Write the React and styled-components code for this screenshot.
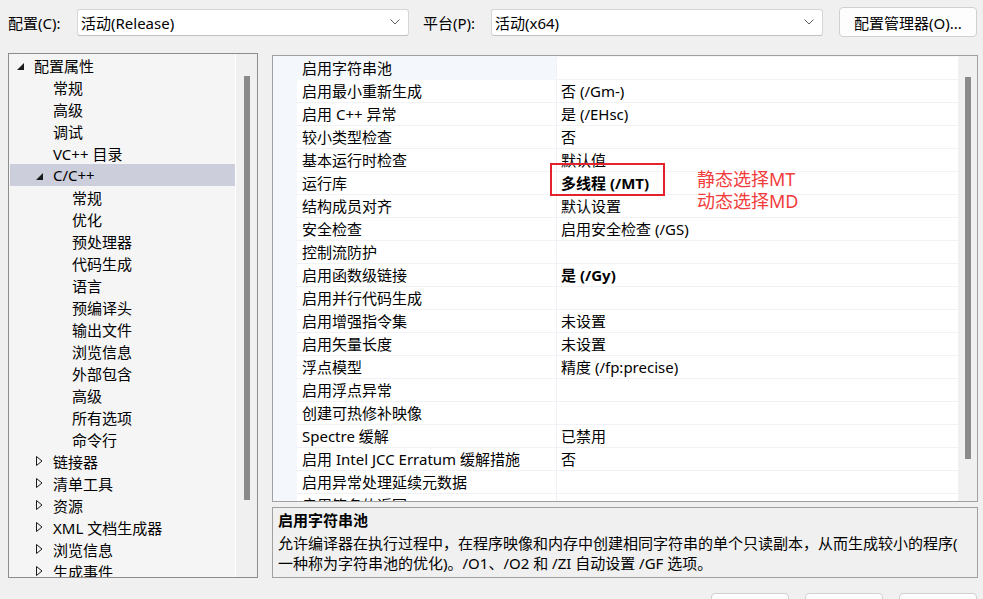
import styled, { createGlobalStyle } from 'styled-components'

const GlobalStyle = createGlobalStyle`
  html, body {
    margin: 0;
    padding: 0;
    background: #f0f0f0;
  }
  body {
    font-family: "Noto Sans", "Noto Sans CJK SC", sans-serif;
    font-size: 15px;
    color: #000;
  }
`

const treeItems = [
  { label: '配置属性', level: 0, toggle: 'open' },
  { label: '常规', level: 1 },
  { label: '高级', level: 1 },
  { label: '调试', level: 1 },
  { label: 'VC++ 目录', level: 1 },
  { label: 'C/C++', level: 1, toggle: 'open', selected: true },
  { label: '常规', level: 2 },
  { label: '优化', level: 2 },
  { label: '预处理器', level: 2 },
  { label: '代码生成', level: 2 },
  { label: '语言', level: 2 },
  { label: '预编译头', level: 2 },
  { label: '输出文件', level: 2 },
  { label: '浏览信息', level: 2 },
  { label: '外部包含', level: 2 },
  { label: '高级', level: 2 },
  { label: '所有选项', level: 2 },
  { label: '命令行', level: 2 },
  { label: '链接器', level: 1, toggle: 'closed' },
  { label: '清单工具', level: 1, toggle: 'closed' },
  { label: '资源', level: 1, toggle: 'closed' },
  { label: 'XML 文档生成器', level: 1, toggle: 'closed' },
  { label: '浏览信息', level: 1, toggle: 'closed' },
  { label: '生成事件', level: 1, toggle: 'closed' },
  { label: '自定义生成步骤', level: 1, toggle: 'closed' },
]

const properties = [
  { name: '启用字符串池', value: '', selected: true },
  { name: '启用最小重新生成', value: '否 (/Gm-)' },
  { name: '启用 C++ 异常', value: '是 (/EHsc)' },
  { name: '较小类型检查', value: '否' },
  { name: '基本运行时检查', value: '默认值' },
  { name: '运行库', value: '多线程 (/MT)', bold: true },
  { name: '结构成员对齐', value: '默认设置' },
  { name: '安全检查', value: '启用安全检查 (/GS)' },
  { name: '控制流防护', value: '' },
  { name: '启用函数级链接', value: '是 (/Gy)', bold: true },
  { name: '启用并行代码生成', value: '' },
  { name: '启用增强指令集', value: '未设置' },
  { name: '启用矢量长度', value: '未设置' },
  { name: '浮点模型', value: '精度 (/fp:precise)' },
  { name: '启用浮点异常', value: '' },
  { name: '创建可热修补映像', value: '' },
  { name: 'Spectre 缓解', value: '已禁用' },
  { name: '启用 Intel JCC Erratum 缓解措施', value: '否' },
  { name: '启用异常处理延续元数据', value: '' },
  { name: '启用签名的返回', value: '' },
]

const Chevron = () => (
  <svg width="10" height="6" viewBox="0 0 10 6">
    <polyline points="0.5,0.5 5,5 9.5,0.5" fill="none" stroke="#606060" strokeWidth="1" />
  </svg>
)

const Toggle = ({ state }) => {
  if (state === 'open') {
    return (
      <ToggleBox $open>
        <svg width="7" height="7" viewBox="0 0 7 7">
          <polygon points="7,0 7,7 0,7" fill="#1a1a1a" />
        </svg>
      </ToggleBox>
    )
  }
  if (state === 'closed') {
    return (
      <ToggleBox>
        <svg width="7" height="10" viewBox="0 0 7 10">
          <polygon points="0.5,0.5 6,5 0.5,9.5" fill="none" stroke="#1a1a1a" strokeWidth="1" />
        </svg>
      </ToggleBox>
    )
  }
  return <ToggleBox />
}

const App = () => {
  return (
    <>
      <GlobalStyle />
      <Page>
        <TopBar>
          <Label>配置(C):</Label>
          <Combo>
            <span>活动(Release)</span>
            <Chevron />
          </Combo>
          <Label $indent>平台(P):</Label>
          <Combo>
            <span>活动(x64)</span>
            <Chevron />
          </Combo>
          <ManagerButton>配置管理器(O)...</ManagerButton>
        </TopBar>

        <Main>
          <TreePanel>
            <TreeList>
              {treeItems.map((item, i) => (
                <TreeRow key={i} $level={item.level} $selected={item.selected}>
                  <Toggle state={item.toggle} />
                  <span>{item.label}</span>
                </TreeRow>
              ))}
            </TreeList>
            <ScrollTrack $width={21}>
              <ScrollThumb $top={22} $height={424} />
            </ScrollTrack>
          </TreePanel>

          <RightColumn>
            <GridPanel>
              <GridBody>
                {properties.map((p, i) => (
                  <GridRow key={i}>
                    <Gutter />
                    <NameCell $selected={p.selected}>{p.name}</NameCell>
                    <ValueCell $bold={p.bold}>{p.value}</ValueCell>
                  </GridRow>
                ))}
              </GridBody>
              <ScrollTrack $width={19}>
                <ScrollThumb $top={21} $height={382} />
              </ScrollTrack>
              <RedBox />
              <Note>
                <div>静态选择MT</div>
                <div>动态选择MD</div>
              </Note>
            </GridPanel>

            <Description>
              <DescTitle>启用字符串池</DescTitle>
              <DescText>
                允许编译器在执行过程中，在程序映像和内存中创建相同字符串的单个只读副本，从而生成较小的程序(
                <br />
                一种称为字符串池的优化)。/O1、/O2 和 /ZI 自动设置 /GF 选项。
              </DescText>
            </Description>
          </RightColumn>
        </Main>

        <BottomBar>
          <DialogButton>确定</DialogButton>
          <DialogButton>取消</DialogButton>
          <DialogButton>应用(A)</DialogButton>
        </BottomBar>
      </Page>
    </>
  )
}

const Page = styled.div`
  width: 983px;
  height: 599px;
  box-sizing: border-box;
  padding: 7px 5px 0 8px;
  display: flex;
  flex-direction: column;
  overflow: hidden;
`

const TopBar = styled.div`
  height: 30px;
  display: flex;
  align-items: center;
`

const Label = styled.div`
  width: ${({ $indent }) => ($indent ? '68px' : '69px')};
  padding-left: ${({ $indent }) => ($indent ? '14px' : '0')};
  white-space: nowrap;
`

const Combo = styled.div`
  width: 332px;
  height: 27px;
  box-sizing: border-box;
  background: #fff;
  border: 1px solid #d6d6d6;
  border-bottom-color: #c0c0c0;
  border-radius: 3px;
  display: flex;
  align-items: center;
  justify-content: space-between;
  padding: 0 8px 0 3px;
`

const ManagerButton = styled.div`
  margin-left: 16px;
  width: 138px;
  height: 30px;
  box-sizing: border-box;
  border: 1px solid #d0d0d0;
  border-radius: 4px;
  background: #fdfdfd;
  display: flex;
  align-items: center;
  justify-content: center;
`

const Main = styled.div`
  margin-top: 16px;
  height: 525px;
  display: grid;
  grid-template-columns: 250px 1fr;
  gap: 14px;
`

const TreePanel = styled.div`
  border: 1px solid #8c8c8c;
  background: #f5f5f5;
  display: flex;
  overflow: hidden;
`

const TreeList = styled.div`
  flex: 1;
  padding: 0 0 0 1px;
  border-right: 1px solid #fff;
  overflow: hidden;
`

const TreeRow = styled.div`
  height: 22px;
  display: flex;
  align-items: center;
  padding-left: ${({ $level }) => 7 + $level * 19}px;
  background: ${({ $selected }) => ($selected ? '#cccedb' : 'transparent')};
  white-space: nowrap;
`

const ToggleBox = styled.span`
  width: 17px;
  flex-shrink: 0;
  display: flex;
  align-items: center;
  padding-top: ${({ $open }) => ($open ? '3px' : '0')};
`

const ScrollTrack = styled.div`
  width: ${({ $width }) => $width}px;
  flex-shrink: 0;
  background: #f0f0f0;
  display: flex;
  justify-content: center;
`

const ScrollThumb = styled.div`
  width: 6px;
  margin-top: ${({ $top }) => $top}px;
  height: ${({ $height }) => $height}px;
  background: #8a8a8a;
`

const RightColumn = styled.div`
  padding-top: 2px;
  display: flex;
  flex-direction: column;
  gap: 5px;
  min-width: 0;
`

const GridPanel = styled.div`
  position: relative;
  height: 447px;
  box-sizing: border-box;
  border: 1px solid #a0a0a0;
  background: #fff;
  display: flex;
  overflow: hidden;
`

const GridBody = styled.div`
  flex: 1;
  padding-top: 1px;
  background: #f4f7fb;
  overflow: hidden;
`

const GridRow = styled.div`
  display: grid;
  grid-template-columns: 24px 260px 1fr;
  height: 23px;
`

const Gutter = styled.div`
  background: #f4f7fb;
`

const NameCell = styled.div`
  padding-left: 5px;
  line-height: 22px;
  white-space: nowrap;
  overflow: hidden;
  background: ${({ $selected }) => ($selected ? '#f4f7fb' : '#fff')};
  border-right: 1px solid #eef0f5;
  border-bottom: 1px solid ${({ $selected }) => ($selected ? '#f4f7fb' : '#f0f2f7')};
`

const ValueCell = styled.div`
  padding-left: 4px;
  line-height: 22px;
  white-space: nowrap;
  background: #fff;
  font-weight: ${({ $bold }) => ($bold ? 700 : 400)};
  border-bottom: 1px solid #f0f2f7;
`

const RedBox = styled.div`
  position: absolute;
  left: 277px;
  top: 107px;
  width: 115px;
  height: 33px;
  box-sizing: border-box;
  border: 2px solid #e3222c;
`

const Note = styled.div`
  position: absolute;
  left: 424px;
  top: 112px;
  color: #f23c3c;
  font-size: 18px;
  line-height: 22px;
`

const Description = styled.div`
  height: 71px;
  box-sizing: border-box;
  border: 1px solid #a0a0a0;
  background: #f0f0f0;
  padding: 1px 5px 0;
  overflow: hidden;
`

const DescTitle = styled.div`
  font-weight: 700;
  line-height: 22px;
`

const DescText = styled.div`
  margin-top: 2px;
  line-height: 20px;
  white-space: nowrap;
`

const BottomBar = styled.div`
  margin-top: 15px;
  display: flex;
  justify-content: flex-end;
  gap: 16px;
  padding-right: 1px;
`

const DialogButton = styled.div`
  width: 78px;
  height: 30px;
  box-sizing: border-box;
  border: 1px solid #d0d0d0;
  border-radius: 4px;
  background: #fdfdfd;
  display: flex;
  align-items: center;
  justify-content: center;
`

export default App
